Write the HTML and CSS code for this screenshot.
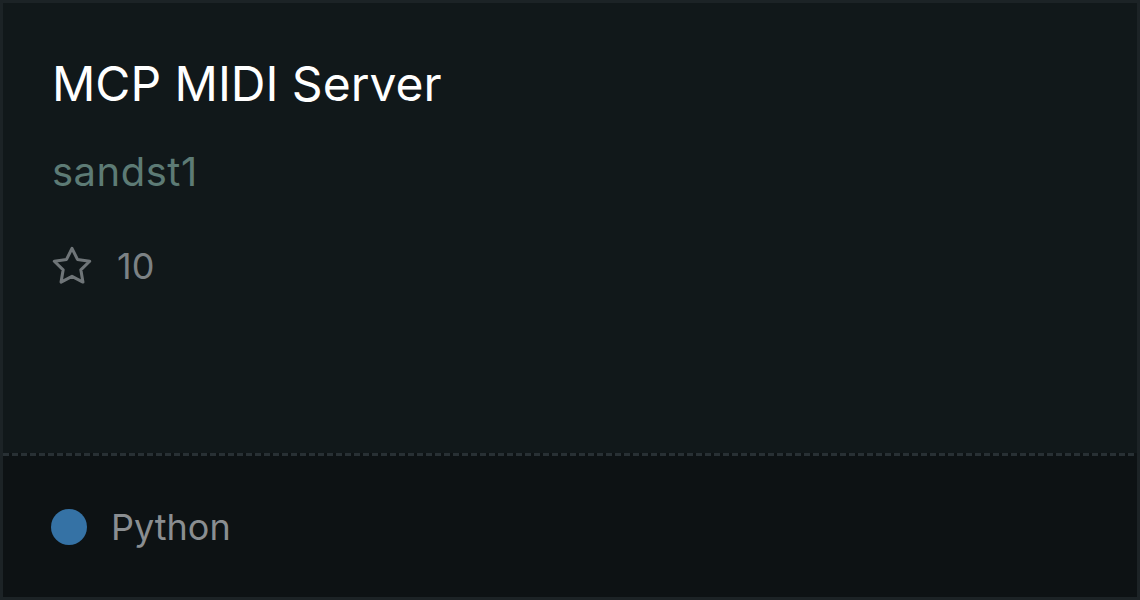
FILE: index.html
```html
<!DOCTYPE html>
<html lang="en">
<head>
  <meta charset="UTF-8">
  <title>MCP MIDI Server</title>
  <link rel="stylesheet" href="styles.css">
</head>
<body>
  <div class="card">
    <div class="card-top">
      <h1 class="title">MCP MIDI Server</h1>
      <div class="owner">sandst1</div>
      <div class="stars">
        <svg class="star" viewBox="0 0 24 24" width="46" height="46">
          <path d="M12 2.8l2.85 5.78 6.38.93-4.62 4.5 1.09 6.35L12 17.36l-5.7 3 1.09-6.35-4.62-4.5 6.38-.93z" fill="none" stroke="currentColor" stroke-width="1.6" stroke-linejoin="round"/>
        </svg>
        <span>10</span>
      </div>
    </div>
    <div class="divider"></div>
    <div class="card-bottom">
      <span class="lang-dot"></span>
      <span class="lang">Python</span>
    </div>
  </div>
</body>
</html>
```

FILE: styles.css
```css
html, body { margin: 0; padding: 0; }
body {
  width: 1140px;
  height: 600px;
  background: #1c2326;
  font-family: Inter, "Noto Sans", sans-serif;
}
.card {
  box-sizing: border-box;
  width: 1140px;
  height: 600px;
  border: 3px solid #1c2326;
  display: flex;
  flex-direction: column;
}
.card-top {
  background: #11181a;
  height: 450px;
  padding: 0 0 0 49px;
  box-sizing: border-box;
}
.title {
  margin: 0;
  padding-top: 51px;
  font-size: 48px;
  font-weight: 400;
  line-height: 60px;
  color: #ffffff;
}
.owner {
  margin-top: 34px;
  font-size: 40px;
  line-height: 48px;
  letter-spacing: 0.5px;
  color: #5d7b75;
}
.stars {
  margin-top: 48px;
  display: flex;
  align-items: center;
  gap: 22px;
  height: 44px;
  color: #6f7578;
  font-size: 36px;
  line-height: 44px;
}
.stars span { color: #7c8285; }
.star { display: block; margin-left: -3px; }
.divider {
  height: 3px;
  background: #0d1214 repeating-linear-gradient(90deg, #283034 0 6px, transparent 6px 9px);
}
.card-bottom {
  flex: 1;
  background: #0d1214;
  display: flex;
  align-items: center;
  padding-left: 48px;
}
.lang-dot {
  width: 36px;
  height: 36px;
  border-radius: 50%;
  background: #3572a5;
}
.lang {
  margin-left: 24px;
  font-size: 36px;
  color: #8a8e91;
}
```
